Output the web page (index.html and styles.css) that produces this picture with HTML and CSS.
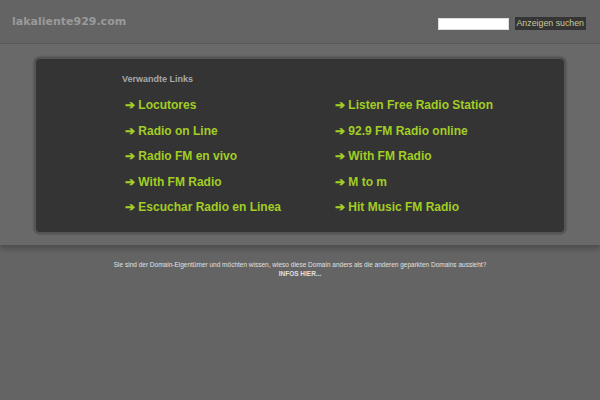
FILE: index.html
```html
<!DOCTYPE html>
<html>
<head>
<meta charset="utf-8">
<link rel="stylesheet" href="styles.css">
</head>
<body>
<header class="top">
  <div class="domain">lakaliente929.com</div>
  <form class="search">
    <input class="search-input" type="text">
    <button class="search-btn" type="button">Anzeigen suchen</button>
  </form>
</header>
<section class="band">
  <div class="box">
    <div class="title">Verwandte Links</div>
    <div class="links">
      <a class="link">➔ Locutores</a>
      <a class="link">➔ Listen Free Radio Station</a>
      <a class="link">➔ Radio on Line</a>
      <a class="link">➔ 92.9 FM Radio online</a>
      <a class="link">➔ Radio FM en vivo</a>
      <a class="link">➔ With FM Radio</a>
      <a class="link">➔ With FM Radio</a>
      <a class="link">➔ M to m</a>
      <a class="link">➔ Escuchar Radio en Linea</a>
      <a class="link">➔ Hit Music FM Radio</a>
    </div>
  </div>
</section>
<footer class="foot">
  <div class="foot-text">Sie sind der Domain-Eigentümer und möchten wissen, wieso diese Domain anders als die anderen geparkten Domains aussieht?</div>
  <div class="foot-link">INFOS HIER...</div>
</footer>
</body>
</html>
```
FILE: styles.css
```css
html, body {
  margin: 0;
  padding: 0;
  background: #646464;
  font-family: "Liberation Sans", Arial, sans-serif;
  width: 600px;
  height: 400px;
  overflow: hidden;
}
.top {
  height: 44px;
  border-bottom: 1px solid #5a5a5a;
  display: flex;
  justify-content: space-between;
  align-items: flex-start;
  padding: 0 14px 0 12px;
  box-sizing: border-box;
}
.domain {
  margin-top: 15px;
  font-family: "DejaVu Sans", Verdana, sans-serif;
  font-size: 11px;
  font-weight: bold;
  color: #9a9a9a;
}
.search {
  margin: 17px 0 0 0;
  display: flex;
  align-items: center;
  gap: 6px;
}
.search-input {
  width: 71px;
  height: 12px;
  border: none;
  padding: 0;
  margin: 0;
  background: #fff;
  box-shadow: inset 0 0 0 1px #ddd;
}
.search-btn {
  height: 13px;
  padding: 0 2px;
  margin: 0;
  border: none;
  background: #353535;
  color: #c8c89a;
  font-family: "Liberation Sans", Arial, sans-serif;
  font-size: 8.8px;
  line-height: 13px;
}
.band {
  background: #696969;
  height: 201px;
  box-shadow: 0 4px 5px rgba(0,0,0,0.22);
  padding: 13px 34px 0 34px;
  box-sizing: border-box;
}
.box {
  height: 177px;
  background: #343434;
  border: 2px solid #555;
  border-radius: 6px;
  box-shadow: 0 0 2px rgba(0,0,0,0.4);
  box-sizing: border-box;
  padding: 15px 0 0 89px;
}
.title {
  font-size: 9px;
  font-weight: bold;
  color: #a8a8a8;
  height: 19px;
  margin-left: -3px;
}
.links {
  display: grid;
  grid-template-columns: 210px 220px;
  grid-auto-rows: 25.6px;
}
.link {
  font-size: 12px;
  font-weight: bold;
  color: #a2cd24;
  line-height: 25.6px;
  white-space: nowrap;
}
.foot {
  padding-top: 15px;
  text-align: center;
  color: #e0e0e0;
  font-size: 6.5px;
}
.foot-text {
  line-height: 9px;
}
.foot-link {
  font-weight: bold;
  line-height: 9px;
}
```
